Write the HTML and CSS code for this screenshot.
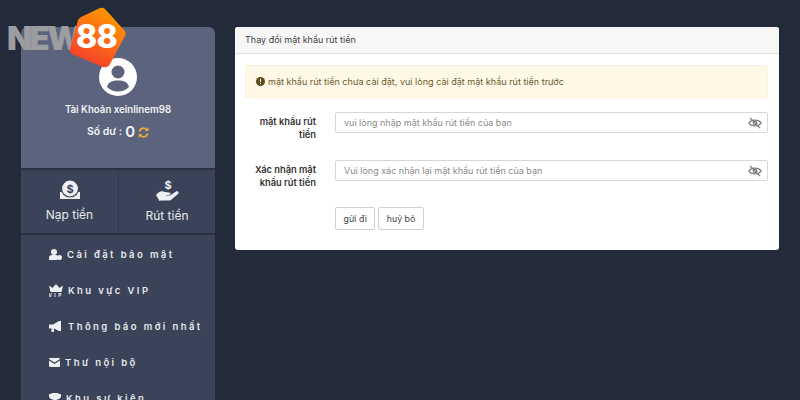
FILE: index.html
```html
<!DOCTYPE html>
<html lang="vi">
<head>
    <meta charset="UTF-8">
    <meta name="viewport" content="width=device-width, initial-scale=1.0">
    <title>Thay đổi mật khẩu rút tiền</title>
    <link rel="stylesheet" href="styles.css">
</head>
<body>
    <!-- Logo -->
    <div class="logo">
        <span class="logo-new">NEW</span>
        <svg class="logo-badge" width="58" height="62" viewBox="0 0 58 62">
            <defs>
                <linearGradient id="badgeGrad" x1="0.7" y1="0" x2="0.2" y2="1">
                    <stop offset="0" stop-color="#ff9a00"/>
                    <stop offset="1" stop-color="#f5382f"/>
                </linearGradient>
            </defs>
            <path d="M31 1 Q34 0 36 2 L55 23 Q58 26 56 29 L41 57 Q39 61 34 60 L3 47 Q0 45 1 42 L9 13 Q10 11 12 10 Z" fill="url(#badgeGrad)"/>
        </svg>
        <span class="logo-num">88</span>
    </div>

    <div class="layout">
        <!-- Columna izquierda -->
        <aside class="sidebar">
            <div class="profile">
                <svg class="avatar" width="38" height="38" viewBox="0 0 38 38">
                    <circle cx="19" cy="19" r="19" fill="#fff"/>
                    <circle cx="19" cy="14" r="6.5" fill="#5c637c"/>
                    <path d="M8 29 C9 24 13 22.5 19 22.5 C25 22.5 29 24 30 29 C27 32 23 33.5 19 33.5 C15 33.5 11 32 8 29 Z" fill="#5c637c"/>
                </svg>
                <div class="account">Tài Khoản xeinlinem98</div>
                <div class="balance">
                    <span>Số dư :</span>
                    <span class="balance-num">0</span>
                    <svg width="11" height="11" viewBox="0 0 12 12" fill="none" stroke="#e9a93a" stroke-width="2">
                        <path d="M1.5 5 A4.6 4.6 0 0 1 9.6 3"/>
                        <path d="M10.5 7 A4.6 4.6 0 0 1 2.4 9"/>
                        <path d="M11.4 0.4 V4.4 H7.2 Z" fill="#e9a93a" stroke="none"/>
                        <path d="M0.6 11.6 V7.6 H4.8 Z" fill="#e9a93a" stroke="none"/>
                    </svg>
                </div>
            </div>

            <div class="money-row">
                <a class="money-btn">
                    <svg width="20" height="20" viewBox="0 0 20 20">
                        <path d="M0 12 H20 V19 H0 Z" fill="#eef0f3"/>
                        <circle cx="10" cy="8.5" r="8.5" fill="#eef0f3" stroke="#3a4358" stroke-width="1.2"/>
                        <text x="10" y="12.5" class="coin-mark">$</text>
                    </svg>
                    <span>Nạp tiền</span>
                </a>
                <a class="money-btn">
                    <svg class="hand-icon" width="23" height="24" viewBox="0 -3 23 24">
                        <text x="12" y="9" class="hand-mark">$</text>
                        <path d="M0 15 C3 11 6 10.5 9 12 L13 12.5 C15 12.6 15 15 13 15 H10 V15.6 H14 L20 11.5 C22 10.5 23.5 12.5 22 14 L16 19 C15 20 14 20.5 13 20.5 H5 L3.5 21 Z" fill="#eef0f3"/>
                    </svg>
                    <span>Rút tiền</span>
                </a>
            </div>

            <nav class="menu">
                <a class="menu-item">
                    <svg width="13" height="11" viewBox="0 0 13 11" fill="#eef0f3">
                        <circle cx="5" cy="3" r="3"/>
                        <path d="M0 11 V8.5 C0 7 1.5 6 3 6 H7 C8 6 8.5 6.5 8.5 7.5 V11 Z"/>
                        <circle cx="10.5" cy="8.5" r="2.5"/>
                    </svg>
                    <span>Cài đặt bảo mật</span>
                </a>
                <a class="menu-item">
                    <svg width="14" height="13" viewBox="0 0 14 13" fill="#eef0f3">
                        <path d="M0 1.5 L3.5 4 L7 0 L10.5 4 L14 1.5 L12.5 8 H1.5 Z"/>
                        <text x="7" y="13" class="vip-mark">VIP</text>
                    </svg>
                    <span>Khu vực VIP</span>
                </a>
                <a class="menu-item">
                    <svg class="horn-icon" width="12" height="11" viewBox="0 0 12 11" fill="#eef0f3">
                        <path d="M0 3.5 H4 L10 0 H12 V10 H10 L5 7.5 V11 H2.5 V7.5 H0 Z"/>
                    </svg>
                    <span>Thông báo mới nhất</span>
                </a>
                <a class="menu-item">
                    <svg width="11" height="9" viewBox="0 0 11 9" fill="#eef0f3">
                        <path d="M0 1 Q0 0 1 0 H10 Q11 0 11 1 L5.5 4.6 L0 1 Z"/>
                        <path d="M0 2.4 L5.5 6 L11 2.4 V8 Q11 9 10 9 H1 Q0 9 0 8 Z"/>
                    </svg>
                    <span>Thư nội bộ</span>
                </a>
                <a class="menu-item">
                    <svg width="12" height="11" viewBox="0 0 12 11" fill="#eef0f3">
                        <path d="M2.5 0 H9.5 V1 H12 V3 C12 5 10.5 6 9 6.2 L7 7.2 V9 H9 V11 H3 V9 H5 V7.2 L3 6.2 C1.5 6 0 5 0 3 V1 H2.5 Z"/>
                    </svg>
                    <span>Khu sự kiện</span>
                </a>
            </nav>
        </aside>

        <!-- Contenido principal -->
        <main class="card">
            <div class="card-header">Thay đổi mật khẩu rút tiền</div>
            <div class="card-body">
                <div class="alert">
                    <svg width="9" height="9" viewBox="0 0 9 9">
                        <circle cx="4.5" cy="4.5" r="4.5" fill="#5f4a1e"/>
                        <path d="M4 1.8 H5 V5 H4 Z M4 6 H5 V7.1 H4 Z" fill="#fff8e6"/>
                    </svg>
                    <span>mật khẩu rút tiền chưa cài đặt, vui lòng cài đặt mật khẩu rút tiền trước</span>
                </div>

                <div class="form-row">
                    <label class="form-label">mật khẩu rút tiền</label>
                    <div class="field">
                        <span class="placeholder">vui lòng nhập mật khẩu rút tiền của bạn</span>
                        <svg class="eye" width="14" height="12" viewBox="0 0 14 12" fill="none" stroke="#777" stroke-width="1.2">
                            <path d="M0.8 6 C3.5 2 10.5 2 13.2 6 C10.5 10 3.5 10 0.8 6 Z"/>
                            <circle cx="7" cy="6" r="1.8"/>
                            <path d="M2 0.8 L12 11.2"/>
                        </svg>
                    </div>
                </div>

                <div class="form-row form-row-second">
                    <label class="form-label">Xác nhận mật khẩu rút tiền</label>
                    <div class="field">
                        <span class="placeholder">Vui lòng xác nhận lại mật khẩu rút tiền của bạn</span>
                        <svg class="eye" width="14" height="12" viewBox="0 0 14 12" fill="none" stroke="#777" stroke-width="1.2">
                            <path d="M0.8 6 C3.5 2 10.5 2 13.2 6 C10.5 10 3.5 10 0.8 6 Z"/>
                            <circle cx="7" cy="6" r="1.8"/>
                            <path d="M2 0.8 L12 11.2"/>
                        </svg>
                    </div>
                </div>

                <div class="form-actions">
                    <button class="btn">gửi đi</button>
                    <button class="btn">huỷ bỏ</button>
                </div>
            </div>
        </main>
    </div>
</body>
</html>
```

FILE: styles.css
```css
/* General */
html, body {
    height: 100%;
}

body {
    margin: 0;
    background-color: #232a39;
    font-family: Inter, "Liberation Sans", sans-serif;
    overflow: hidden;
    position: relative;
}

.layout {
    display: flex;
    align-items: flex-start;
    gap: 20px;
    padding: 27px 21px 0;
}

/* Logo */
.logo {
    position: absolute;
    left: 0;
    top: 0;
    z-index: 10;
    width: 130px;
    height: 72px;
}

.logo-new {
    position: absolute;
    left: 7px;
    top: 19px;
    font-size: 33px;
    line-height: 38px;
    font-weight: 900;
    letter-spacing: -2.8px;
    color: #9c9da1;
}

.logo-badge {
    position: absolute;
    left: 69px;
    top: 7px;
}

.logo-num {
    position: absolute;
    left: 76px;
    top: 18px;
    font-size: 32px;
    line-height: 38px;
    font-weight: 800;
    letter-spacing: -0.8px;
    color: #fff;
}

/* Sidebar */
.sidebar {
    width: 194px;
    flex: none;
    background-color: #3a4358;
    border-radius: 6px 6px 0 0;
    height: 373px;
    overflow: hidden;
}

.profile {
    height: 141px;
    box-sizing: border-box;
    padding-top: 31px;
    background-color: #5c637c;
    border-radius: 6px 6px 0 0;
    display: flex;
    flex-direction: column;
    align-items: center;
    color: #f2f3f6;
}

.account {
    margin-top: 7px;
    font-size: 9.7px;
    line-height: 14px;
    font-weight: 600;
}

.balance {
    margin-top: 7px;
    display: flex;
    align-items: center;
    gap: 3px;
    font-size: 10.5px;
    line-height: 16px;
    font-weight: 600;
}

.balance-num {
    font-size: 15px;
}

.money-row {
    display: flex;
    height: 67px;
    box-sizing: border-box;
    border-top: 2px solid #2a3142;
    border-bottom: 2px solid #2a3142;
}

.money-btn {
    flex: 1;
    display: flex;
    flex-direction: column;
    align-items: center;
    padding-top: 10px;
    gap: 7px;
    color: #e6e9ee;
    font-size: 12px;
    line-height: 16px;
}

.money-btn:first-child {
    flex: none;
    width: 98px;
    box-sizing: border-box;
    border-right: 1px solid #2f3748;
}

.hand-icon {
    margin-top: -3px;
}

.coin-mark {
    font-family: Inter, sans-serif;
    font-size: 11px;
    font-weight: 700;
    text-anchor: middle;
    fill: #3a4358;
}

.hand-mark {
    font-family: Inter, sans-serif;
    font-size: 11px;
    font-weight: 700;
    text-anchor: middle;
    fill: #eef0f3;
}

.vip-mark {
    font-family: Inter, sans-serif;
    font-size: 5px;
    font-weight: 700;
    text-anchor: middle;
    fill: #eef0f3;
}

.menu {
    display: flex;
    flex-direction: column;
    padding-left: 28px;
    padding-top: 1px;
}

.menu-item {
    height: 36.2px;
    flex: none;
    display: flex;
    align-items: center;
    gap: 5px;
    color: #e6e9ee;
    font-size: 9.5px;
    font-weight: 600;
    letter-spacing: 2.4px;
    white-space: nowrap;
}

.horn-icon {
    margin-right: 2px;
}

/* Card */
.card {
    width: 544px;
    flex: none;
    height: 223px;
    background-color: #fff;
    border-radius: 3px;
    overflow: hidden;
}

.card-header {
    height: 27px;
    box-sizing: border-box;
    padding-left: 10px;
    background-color: #f7f7f7;
    border-bottom: 1px solid #dfdfdf;
    font-size: 9px;
    line-height: 26px;
    color: #3d3d3d;
}

.card-body {
    padding: 11px 11px 0 10px;
}

.alert {
    height: 33px;
    box-sizing: border-box;
    padding-left: 10px;
    display: flex;
    align-items: center;
    gap: 3px;
    background-color: #fff8e6;
    border: 1px solid #fbf3dc;
    border-radius: 2px;
    font-size: 9.05px;
    color: #6b5a2c;
}

.form-row {
    display: flex;
    gap: 19px;
    margin-top: 14px;
}

.form-row-second {
    margin-top: 19px;
}

.form-label {
    width: 71px;
    flex: none;
    text-align: right;
    font-size: 9.3px;
    line-height: 13px;
    font-weight: 600;
    color: #333;
    padding-top: 3px;
}

.field {
    flex: 1;
    height: 21px;
    box-sizing: border-box;
    display: flex;
    align-items: center;
    justify-content: space-between;
    padding: 0 5px 0 8px;
    border: 1px solid #d6d6dc;
    border-radius: 2px;
    background-color: #fff;
}

.placeholder {
    font-size: 9px;
    color: #8a8a8a;
}

.form-actions {
    display: flex;
    gap: 3px;
    margin-top: 18px;
    padding-left: 90px;
}

.btn {
    height: 23px;
    padding: 0 7.5px;
    background-color: #fff;
    border: 1px solid #d0d0d4;
    border-radius: 2px;
    font-family: inherit;
    font-size: 8.8px;
    color: #444;
}
```
